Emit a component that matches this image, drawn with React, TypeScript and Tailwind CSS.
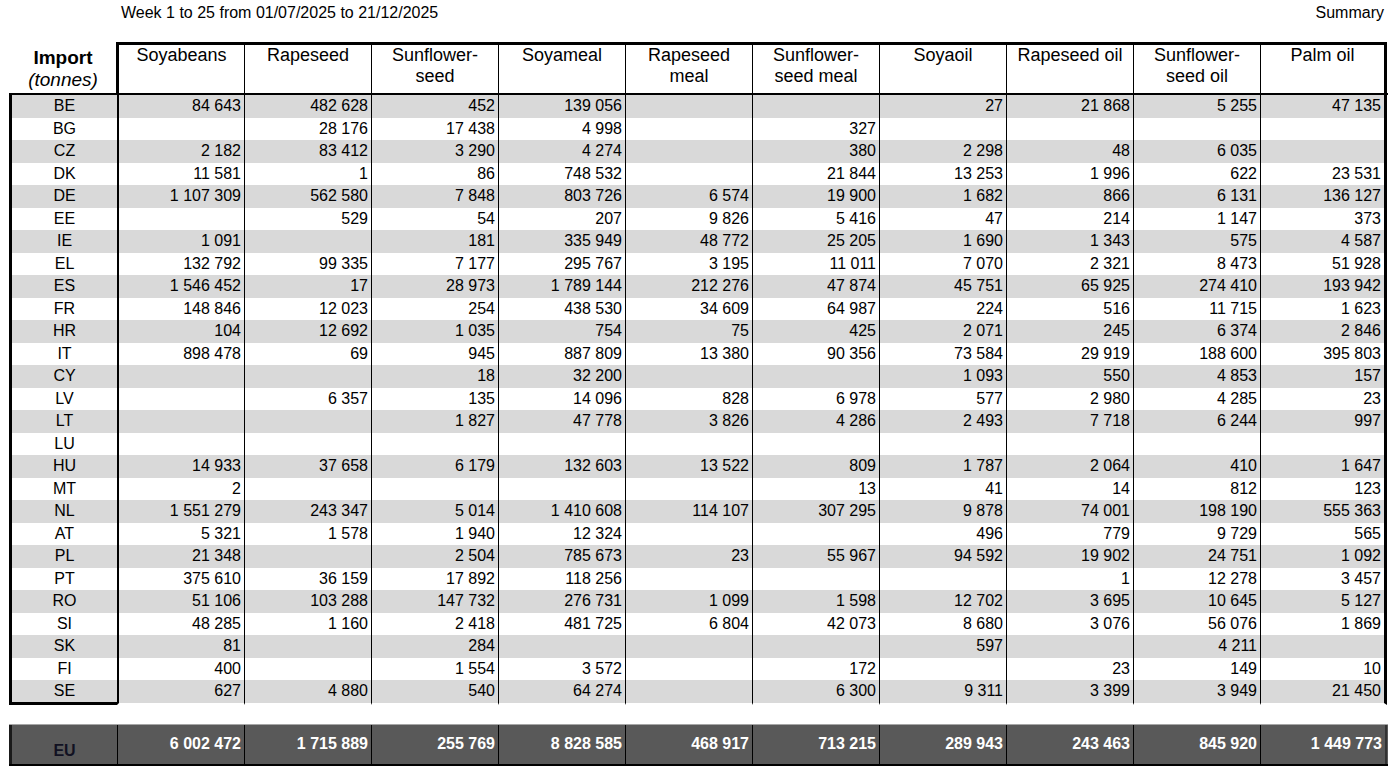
const columns = [
  ['Soyabeans'],
  ['Rapeseed'],
  ['Sunflower-', 'seed'],
  ['Soyameal'],
  ['Rapeseed', 'meal'],
  ['Sunflower-', 'seed meal'],
  ['Soyaoil'],
  ['Rapeseed oil'],
  ['Sunflower-', 'seed oil'],
  ['Palm oil'],
]

const rows: [string, string[]][] = [
  ['BE', ['84 643', '482 628', '452', '139 056', '', '', '27', '21 868', '5 255', '47 135']],
  ['BG', ['', '28 176', '17 438', '4 998', '', '327', '', '', '', '']],
  ['CZ', ['2 182', '83 412', '3 290', '4 274', '', '380', '2 298', '48', '6 035', '']],
  ['DK', ['11 581', '1', '86', '748 532', '', '21 844', '13 253', '1 996', '622', '23 531']],
  ['DE', ['1 107 309', '562 580', '7 848', '803 726', '6 574', '19 900', '1 682', '866', '6 131', '136 127']],
  ['EE', ['', '529', '54', '207', '9 826', '5 416', '47', '214', '1 147', '373']],
  ['IE', ['1 091', '', '181', '335 949', '48 772', '25 205', '1 690', '1 343', '575', '4 587']],
  ['EL', ['132 792', '99 335', '7 177', '295 767', '3 195', '11 011', '7 070', '2 321', '8 473', '51 928']],
  ['ES', ['1 546 452', '17', '28 973', '1 789 144', '212 276', '47 874', '45 751', '65 925', '274 410', '193 942']],
  ['FR', ['148 846', '12 023', '254', '438 530', '34 609', '64 987', '224', '516', '11 715', '1 623']],
  ['HR', ['104', '12 692', '1 035', '754', '75', '425', '2 071', '245', '6 374', '2 846']],
  ['IT', ['898 478', '69', '945', '887 809', '13 380', '90 356', '73 584', '29 919', '188 600', '395 803']],
  ['CY', ['', '', '18', '32 200', '', '', '1 093', '550', '4 853', '157']],
  ['LV', ['', '6 357', '135', '14 096', '828', '6 978', '577', '2 980', '4 285', '23']],
  ['LT', ['', '', '1 827', '47 778', '3 826', '4 286', '2 493', '7 718', '6 244', '997']],
  ['LU', ['', '', '', '', '', '', '', '', '', '']],
  ['HU', ['14 933', '37 658', '6 179', '132 603', '13 522', '809', '1 787', '2 064', '410', '1 647']],
  ['MT', ['2', '', '', '', '', '13', '41', '14', '812', '123']],
  ['NL', ['1 551 279', '243 347', '5 014', '1 410 608', '114 107', '307 295', '9 878', '74 001', '198 190', '555 363']],
  ['AT', ['5 321', '1 578', '1 940', '12 324', '', '', '496', '779', '9 729', '565']],
  ['PL', ['21 348', '', '2 504', '785 673', '23', '55 967', '94 592', '19 902', '24 751', '1 092']],
  ['PT', ['375 610', '36 159', '17 892', '118 256', '', '', '', '1', '12 278', '3 457']],
  ['RO', ['51 106', '103 288', '147 732', '276 731', '1 099', '1 598', '12 702', '3 695', '10 645', '5 127']],
  ['SI', ['48 285', '1 160', '2 418', '481 725', '6 804', '42 073', '8 680', '3 076', '56 076', '1 869']],
  ['SK', ['81', '', '284', '', '', '', '597', '', '4 211', '']],
  ['FI', ['400', '', '1 554', '3 572', '', '172', '', '23', '149', '10']],
  ['SE', ['627', '4 880', '540', '64 274', '', '6 300', '9 311', '3 399', '3 949', '21 450']],
]

const totals = ['6 002 472', '1 715 889', '255 769', '8 828 585', '468 917', '713 215', '289 943', '243 463', '845 920', '1 449 773']

const App = () => {
  return (
    <div className="w-[1395px] h-[774px] bg-white text-black font-['Liberation_Sans',Arial,sans-serif]">
      <div className="flex h-[42px] pt-px text-[16px] leading-6">
        <p className="ml-[121px]">Week 1 to 25 from 01/07/2025 to 21/12/2025</p>
        <p className="ml-auto mr-[11px]">Summary</p>
      </div>

      <div className="ml-[9px] w-[1379px]">
        {/* header */}
        <div className="flex h-[51px]">
          <div className="w-[108px] flex flex-col items-center justify-end pb-[2px] text-[19px] leading-[22px]">
            <p className="font-bold">Import</p>
            <p className="italic">(tonnes)</p>
          </div>
          {columns.map((c, i) => (
            <div
              key={i}
              className={`w-[127px] border-t-[3px] border-black text-center text-[18px] leading-[21px] ${
                i === 0 ? 'border-l-[3px] -ml-px w-[128px]' : 'border-l'
              } ${i === 9 ? 'border-r-[3px]' : ''}`}
            >
              {c.map((l) => (
                <p key={l}>{l}</p>
              ))}
            </div>
          ))}
        </div>

        {/* body */}
        <div className="border-t-2 border-black text-[16px] leading-[22px]">
          {rows.map(([code, vals], r) => {
            const last = r === rows.length - 1
            const shade = r % 2 === 0 ? 'bg-[#d9d9d9]' : 'bg-white'
            return (
              <div key={code} className={`flex ${last ? 'h-[24.5px]' : 'h-[22.5px]'}`}>
                <div
                  className={`w-[108px] border-l-[3px] border-black text-center ${shade} ${
                    last ? 'border-b-[3px]' : ''
                  }`}
                >
                  {code}
                </div>
                {vals.map((v, i) => (
                  <div
                    key={i}
                    className={`w-[127px] border-black text-right pr-[3px] bg-clip-padding ${shade} ${
                      i === 0 ? 'border-l-2' : 'border-l'
                    } ${i === 9 ? 'border-r-[3px]' : ''} ${last ? 'border-b-2 border-b-transparent' : ''}`}
                  >
                    {v}
                  </div>
                ))}
              </div>
            )
          })}
        </div>

        {/* EU total */}
        <div className="mt-[19px] flex h-[42px] bg-[#595959] border-t border-t-[#a6a6a6] border-b-2 border-b-black text-[16px]">
          <div className="w-[108px] border-l-[3px] border-l-[#1a1a1a] flex items-end justify-center pb-[2px] font-bold text-[#111122] leading-[22px]">
            EU
          </div>
          {totals.map((t, i) => (
            <div
              key={i}
              className={`w-[127px] border-l border-black flex items-center justify-end pr-[3px] font-bold text-white ${
                i === 9 ? 'border-r-2 border-r-[#333]' : ''
              }`}
            >
              {t}
            </div>
          ))}
        </div>
      </div>
    </div>
  )
}

export default App
